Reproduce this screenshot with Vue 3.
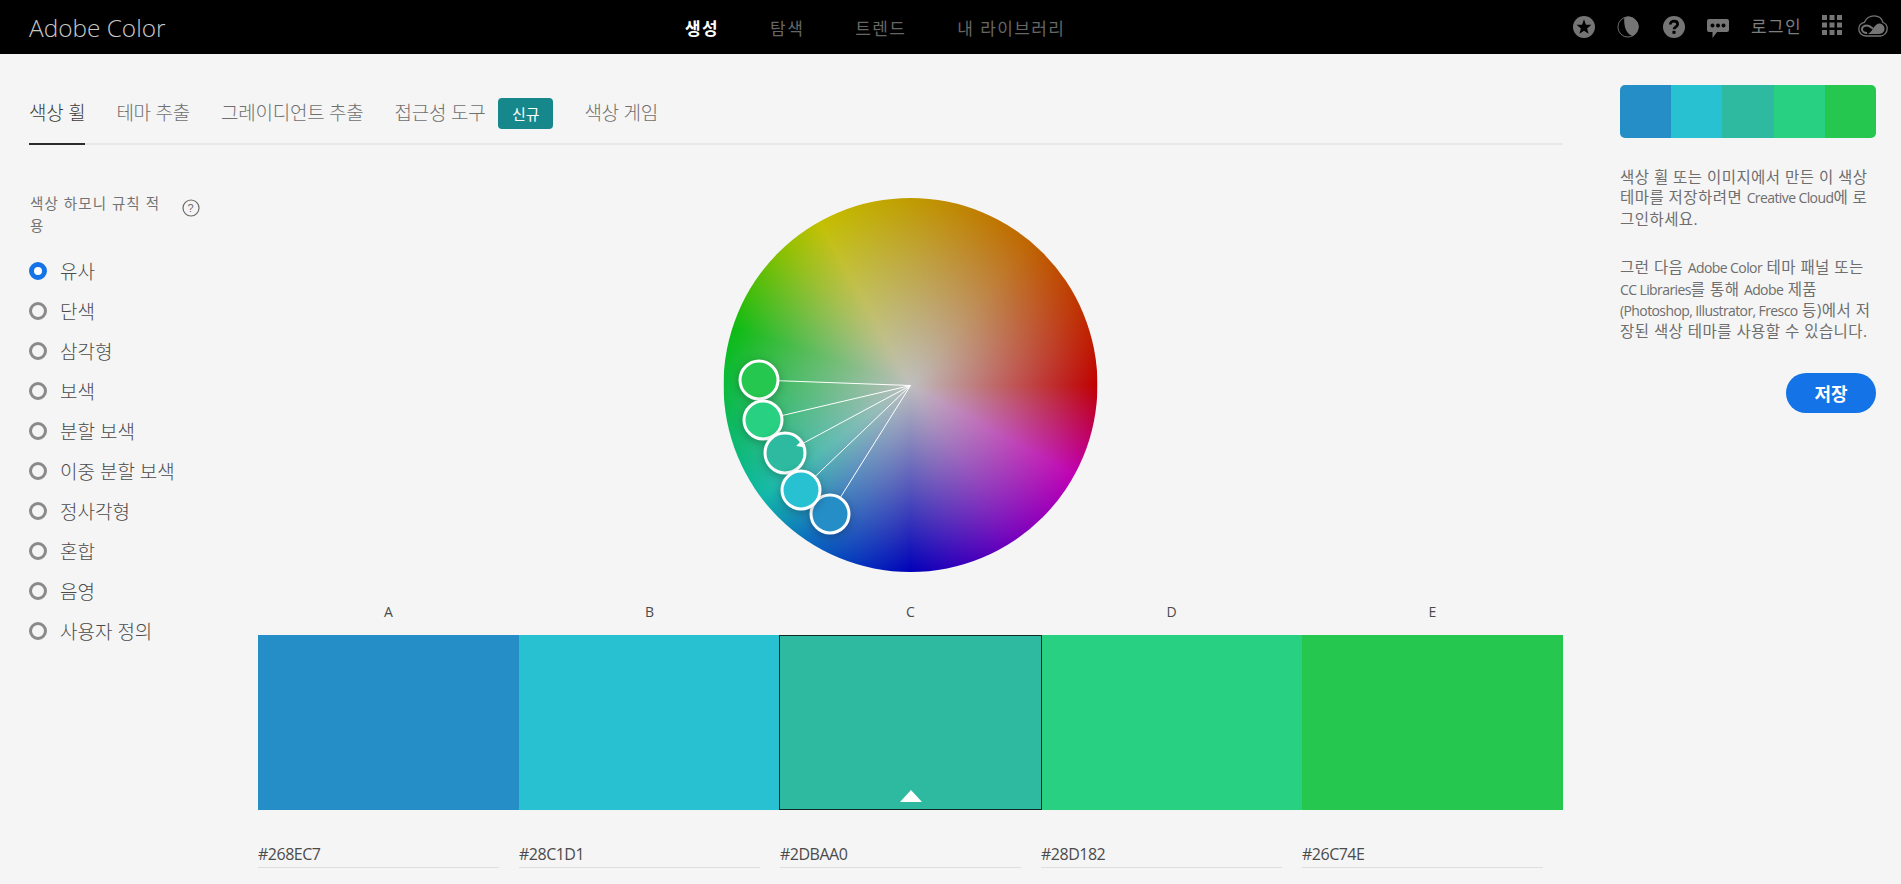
<script setup>
const links = ['생성', '탐색', '트렌드', '내 라이브러리']
const tabs = ['색상 휠', '테마 추출', '그레이디언트 추출', '접근성 도구', '색상 게임']
const rules = ['유사', '단색', '삼각형', '보색', '분할 보색', '이중 분할 보색', '정사각형', '혼합', '음영', '사용자 정의']
const swatches = [
  { l: 'A', c: '#268EC7' },
  { l: 'B', c: '#28C1D1' },
  { l: 'C', c: '#2DBAA0', active: true },
  { l: 'D', c: '#28D182' },
  { l: 'E', c: '#26C74E' }
]
const handles = [
  { x: 35.500, y: 182, r: 19, c: '#26C74E' },
  { x: 39.500, y: 222, r: 19, c: '#28D182' },
  { x: 106.500, y: 316, r: 19, c: '#268EC7' },
  { x: 61.500, y: 255, r: 20, c: '#2DBAA0' },
  { x: 77.500, y: 292, r: 19, c: '#28C1D1' }
]
</script>

<template>
  <div class="page">
    <header class="top">
      <div class="brand">Adobe Color</div>
      <nav class="links">
        <a v-for="(n, i) in links" :key="n" :class="{ on: i === 0 }">{{ n }}</a>
      </nav>
      <div class="tools">
        <svg class="ic" viewBox="0 0 24 24"><circle cx="12" cy="12" r="12" fill="#757575"/><path fill="#000" d="M12 3.500l2.060 6.170h6.020l-4.750 3.910 1.670 5.800L12 16l-5 3.380 1.670-5.800-4.750-3.910h6.020z"/></svg>
        <svg class="ic" viewBox="0 0 24 24"><circle cx="12" cy="12" r="11" fill="none" stroke="#757575" stroke-width="1"/><path fill="#757575" d="M8 1.500A11 11 0 1 1 17 21.800C11 20 7 13 8 1.500z"/></svg>
        <svg class="ic q" viewBox="0 0 24 24"><circle cx="12" cy="12" r="12" fill="#757575"/><path fill="none" stroke="#000" stroke-width="3" d="M8 9.200c0-2.300 1.800-3.600 4-3.600s4 1.200 4 3.300c0 2.800-4 2.900-4 5.600"/><rect x="10.300" y="16.200" width="3.400" height="3.200" fill="#000"/></svg>
        <svg class="chat" viewBox="0 0 22 19"><path fill="#757575" d="M2 0h18a2 2 0 0 1 2 2v9a2 2 0 0 1-2 2H10l-4.500 6v-6H2a2 2 0 0 1-2-2V2a2 2 0 0 1 2-2z"/><circle cx="5.500" cy="6.500" r="2" fill="#000"/><circle cx="11" cy="6.500" r="2" fill="#000"/><circle cx="16.500" cy="6.500" r="2" fill="#000"/></svg>
        <span class="login">로그인</span>
        <svg class="grid" viewBox="0 0 20 20"><g fill="#757575"><rect x="0" y="0" width="5" height="5"/><rect x="7.500" y="0" width="5" height="5"/><rect x="15" y="0" width="5" height="5"/><rect x="0" y="7.500" width="5" height="5"/><rect x="7.500" y="7.500" width="5" height="5"/><rect x="15" y="7.500" width="5" height="5"/><rect x="0" y="15" width="5" height="5"/><rect x="7.500" y="15" width="5" height="5"/><rect x="15" y="15" width="5" height="5"/></g></svg>
        <svg class="cc" viewBox="0 0 30 22"><path fill="none" stroke="#757575" stroke-width="1.300" d="M8 21C3.500 21 .8 17.500.8 14c0-3.500 2.500-6.200 5.700-6.700C8 3.500 12 .8 16 .8c4.500 0 8 2.800 9 6.700 2.700 1 4.200 3.500 4.200 6 0 4.300-3.200 7.500-7.200 7.500z"/><path fill="none" stroke="#757575" stroke-width="2" d="M9 18c-3 0-5-1.700-5-3.700S6 10.500 9 10.500c2.500 0 4 1.500 6 3.200"/><path fill="#757575" d="M21 8.500c-5 0-7 10.500-12 10.500h12c3 0 5.500-2 5.500-5.200S24 8.500 21 8.500z"/></svg>
      </div>
    </header>

    <div class="body">
      <main class="main">
        <div class="tabs">
          <template v-for="(t, i) in tabs" :key="t">
            <a class="tab" :class="{ on: i === 0 }">{{ t }}</a>
            <span v-if="i === 3" class="new">신규</span>
          </template>
        </div>

        <div class="work">
          <aside class="side">
            <div class="side-head">
              <span>색상 하모니 규칙 적<br>용</span>
              <svg class="hint" viewBox="0 0 18 18"><circle cx="9" cy="9" r="8" fill="none" stroke="#6a6a6a" stroke-width="1.200"/><text x="9" y="13" text-anchor="middle" font-size="11" fill="#6a6a6a" font-family="Liberation Sans, sans-serif">?</text></svg>
            </div>
            <label v-for="(r, i) in rules" :key="r" class="rule">
              <span class="radio" :class="{ on: i === 0 }"></span>{{ r }}
            </label>
          </aside>

          <section class="center">
            <div class="wheel">
              <svg class="marks" viewBox="0 0 374 374">
                <line v-for="h in handles" :key="h.c" :x1="h.x" :y1="h.y" x2="187" y2="187.500" stroke="#fff" stroke-width="1"/>
                <circle v-for="h in handles" :key="h.c" class="handle" :cx="h.x" :cy="h.y" :r="h.r" :fill="h.c"/>
                <path d="M72.700 248l5-5.300 2.600 6.600z" fill="#fff"/>
              </svg>
            </div>

            <div class="labels"><span v-for="s in swatches" :key="s.l">{{ s.l }}</span></div>
            <div class="swatches">
              <div v-for="s in swatches" :key="s.l" class="sw" :class="{ on: s.active }" :style="{ background: s.c }">
                <i v-if="s.active" class="tri"></i>
              </div>
            </div>
            <div class="hexes">
              <div v-for="s in swatches" :key="s.l" class="hex">{{ s.c }}</div>
            </div>
          </section>
        </div>
      </main>

      <aside class="panel">
        <div class="mini">
          <span v-for="s in swatches" :key="s.l" :style="{ background: s.c }"></span>
        </div>
        <p class="p1">색상 휠 또는 이미지에서 만든 이 색상<br>테마를 저장하려면 <span class="lat">Creative Cloud</span>에 로<br>그인하세요.</p>
        <p class="p2">그런 다음 <span class="lat">Adobe Color</span> 테마 패널 또는<br><span class="lat">CC Libraries</span>를 통해 <span class="lat">Adobe</span> 제품<br><span class="lat">(Photoshop, Illustrator, Fresco</span> 등)에서 저<br>장된 색상 테마를 사용할 수 있습니다.</p>
        <div class="save-row"><button class="save">저장</button></div>
      </aside>
    </div>
  </div>
</template>

<style>
html, body { margin: 0; overflow: hidden; background: #f5f5f5; }
</style>

<style scoped>
.page {
  width: 1901px;
  height: 884px;
  overflow: hidden;
  background: #f5f5f5;
  font-family: "Open Sans", "Noto Sans CJK KR", sans-serif;
  color: #4b4b4b;
}
.top {
  height: 54px;
  background: #000;
  display: flex;
  align-items: center;
  padding: 0 13px 0 29px;
}
.brand {
  width: 656px;
  flex: none;
  font-family: "Open Sans", sans-serif;
  font-weight: 300;
  font-size: 24.400px;
  color: #c8c8c8;
}
.links { display: flex; gap: 51px; }
.links a { font-size: 17px; letter-spacing: 1.400px; font-weight: 400; color: #666; }
.links a.on { color: #fff; font-weight: 700; }
.tools { margin-left: auto; display: flex; align-items: center; gap: 22px; }
.ic { width: 22px; height: 22px; }
.q { margin-left: 2px; }
.chat { width: 22px; height: 19px; margin-top: 2px; }
.grid { width: 20px; height: 20px; margin-left: -2px; margin-bottom: 4px; }
.login { font-size: 17px; letter-spacing: 1.400px; color: #7e7e7e; margin-bottom: 4px; }
.cc { width: 30px; height: 22px; margin-left: -6px; margin-bottom: 2px; }

.body { display: flex; }
.main { width: 1534px; margin-left: 29px; }
.tabs {
  height: 91px;
  box-sizing: border-box;
  display: flex;
  align-items: flex-end;
  gap: 31px;
  border-bottom: 2px solid #e8e8e8;
}
.tab {
  height: 58px;
  box-sizing: border-box;
  margin-bottom: -2px;
  line-height: 52px;
  font-size: 19px;
  font-weight: 300;
  color: #6f6f6f;
  letter-spacing: -0.25px;
}
.tab.on { color: #3a3a3a; border-bottom: 2px solid #2c2c2c; }
.new {
  align-self: flex-start;
  margin: 44px 0 0 -18px;
  width: 55px;
  height: 31px;
  border-radius: 4px;
  background: #16888c;
  color: #fff;
  font-size: 15px;
  display: flex;
  align-items: center;
  justify-content: center;
}
.work { display: flex; }
.side { width: 229px; flex: none; padding-top: 48px; box-sizing: border-box; }
.side-head {
  width: 171px;
  display: flex;
  justify-content: space-between;
  font-size: 14.500px;
  letter-spacing: 1.100px;
  line-height: 22px;
  color: #737373;
  margin-bottom: 14px;
}
.side-head span { padding-left: 1px; }
.hint { width: 18px; height: 18px; margin-top: 6px; }
.rule {
  height: 40px;
  display: flex;
  align-items: center;
  gap: 13px;
  font-size: 19px;
  font-weight: 300;
  color: #4b4b4b;
}
.radio {
  width: 18px;
  height: 18px;
  box-sizing: border-box;
  border-radius: 50%;
  border: 3px solid #8a8a8a;
}
.radio.on { border: 5.500px solid #1473e6; background: #fff; }
.center { width: 1305px; flex: none; }
.wheel {
  position: relative;
  width: 374px;
  height: 374px;
  margin: 53px auto 0;
  transform: translateX(-0.5px);
  border-radius: 50%;
  background:
    radial-gradient(closest-side, rgba(190, 190, 190, 1) 0%, rgba(190, 190, 190, 0.85) 15%, rgba(190, 190, 190, 0.5) 50%, rgba(190, 190, 190, 0) 100%),
    conic-gradient(#c09b00 0deg, #bf6400 40deg, #bf0000 90deg, #c000b4 119deg, #7a00bd 145deg, #0000b8 180deg, #0a6abf 213deg, #0eb8a8 233deg, #08ba50 262deg, #0cbb10 288deg, #93c000 318deg, #c4c000 331deg, #c09b00 360deg);
}
.marks { position: absolute; inset: 0; width: 100%; height: 100%; overflow: visible; }
.handle { stroke: #fff; stroke-width: 3; filter: drop-shadow(0 2px 4px rgba(0, 0, 0, 0.25)); }
.labels, .swatches { display: grid; grid-template-columns: repeat(5, 1fr); }
.labels { margin-top: 30px; height: 20px; text-align: center; font-size: 14px; line-height: 20px; color: #4b4b4b; }
.swatches { margin-top: 13px; height: 175px; }
.sw { position: relative; box-sizing: border-box; }
.sw.on { border: 1px solid #0c2a26; margin: 0 -1px; z-index: 1; }
.tri {
  position: absolute;
  left: 50%;
  bottom: 7px;
  margin-left: -11px;
  border-left: 11px solid transparent;
  border-right: 11px solid transparent;
  border-bottom: 12px solid #fff;
}
.hexes { display: grid; grid-template-columns: repeat(5, 1fr); margin-top: 33px; }
.hex {
  width: 241px;
  height: 24px;
  line-height: 22px;
  font-size: 16px;
  letter-spacing: -0.5px;
  color: #4b4b4b;
  border-bottom: 1px solid #dedede;
}
.panel { width: 256px; margin-left: 57px; padding-top: 31px; }
.mini { display: grid; grid-template-columns: repeat(5, 1fr); height: 53px; border-radius: 5px; overflow: hidden; }
.panel p {
  margin: 0;
  font-size: 15.500px;
  line-height: 20.400px;
  color: #6e6e6e;
  letter-spacing: 0.45px;
  white-space: nowrap;
}
.lat { font-size: 14px; letter-spacing: -0.6px; }
.p1 { padding-top: 29px; }
.p2 { padding-top: 28px; }
.save-row { display: flex; justify-content: flex-end; margin-top: 31px; }
.save {
  width: 90px;
  height: 40px;
  border: 0;
  border-radius: 20px;
  background: #1473e6;
  color: #fff;
  font-family: inherit;
  font-weight: 700;
  font-size: 18px;
}
</style>
